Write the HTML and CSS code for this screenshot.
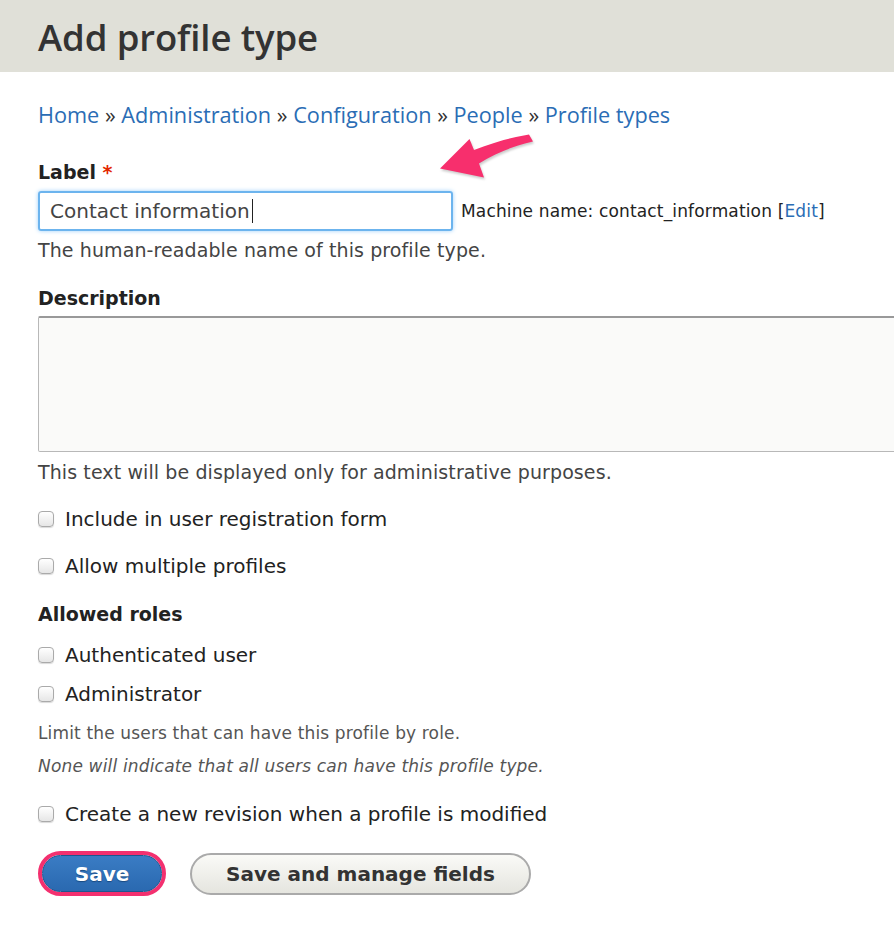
FILE: index.html
```html
<!DOCTYPE html>
<html lang="en">
<head>
<meta charset="utf-8">
<title>Add profile type</title>
<link rel="stylesheet" href="styles.css">
</head>
<body>
<header class="page-header">
  <h1 class="page-title">Add profile type</h1>
</header>
<main class="content">
  <nav class="breadcrumb">
    <a href="#">Home</a> » <a href="#">Administration</a> » <a href="#">Configuration</a> » <a href="#">People</a> » <a href="#">Profile types</a>
  </nav>
  <form class="form">
    <div class="item item-label">
      <label class="label">Label <span class="req">*</span></label>
      <div class="input-row">
        <div class="text-input"><span>Contact information</span><span class="caret"></span></div>
        <span class="machine">Machine name: contact_information <span class="bracket">[<a href="#">Edit</a>]</span></span>
      </div>
      <div class="help">The human-readable name of this profile type.</div>
    </div>
    <div class="item item-desc">
      <label class="label">Description</label>
      <div class="textarea"></div>
      <div class="help help-desc">This text will be displayed only for administrative purposes.</div>
    </div>
    <label class="check check-first"><input type="checkbox"><span>Include in user registration form</span></label>
    <label class="check check-second"><input type="checkbox"><span>Allow multiple profiles</span></label>
    <div class="roles">
      <div class="label">Allowed roles</div>
      <label class="check check-role1"><input type="checkbox"><span>Authenticated user</span></label>
      <label class="check check-role2"><input type="checkbox"><span>Administrator</span></label>
      <div class="small">Limit the users that can have this profile by role.</div>
      <div class="small small-italic">None will indicate that all users can have this profile type.</div>
    </div>
    <label class="check check-rev"><input type="checkbox"><span>Create a new revision when a profile is modified</span></label>
    <div class="actions">
      <span class="save-ring"><button type="button" class="btn btn-primary">Save</button></span>
      <button type="button" class="btn btn-secondary">Save and manage fields</button>
    </div>
  </form>
  <svg class="arrow" width="100" height="50" viewBox="435 130 100 50" aria-hidden="true">
    <path d="M440 168.5 L469.5 139 L474 150 C494 142 511 137.5 529 134.5 L533 141.5 C512 146.5 495 153.5 479 163.5 L484 177.5 Z" fill="#f72f6d"/>
  </svg>
</main>
</body>
</html>
```
FILE: styles.css
```css
html, body {
  margin: 0;
  padding: 0;
  background: #fff;
  overflow: hidden;
}
body {
  font-family: "DejaVu Sans", "Liberation Sans", sans-serif;
  color: #333;
  width: 894px;
  height: 944px;
}
.page-header {
  background: #e0e0d8;
  height: 72px;
  padding: 0 38px;
  display: flex;
  align-items: center;
}
.page-title {
  margin: 2px 0 0;
  font-family: "Open Sans", "Lato", sans-serif;
  font-weight: 600;
  font-size: 36.5px;
  color: #333;
  line-height: 40px;
  letter-spacing: -0.1px;
}
.content {
  position: relative;
  padding: 31px 0 0 38px;
}
.breadcrumb {
  line-height: 24px;
  font-family: "Open Sans", "Lato", sans-serif;
  font-size: 21.7px;
  color: #333;
}
.breadcrumb a, .machine a {
  color: #2a6db5;
  text-decoration: none;
}
.label {
  display: block;
  font-weight: bold;
  font-size: 19px;
  line-height: 24px;
  color: #222;
}
.req { color: #e32700; }
.item-label { margin-top: 33px; }
.input-row {
  margin-top: 7px;
  display: flex;
  align-items: center;
  gap: 8px;
}
.text-input {
  box-sizing: border-box;
  width: 415px;
  height: 40px;
  border: 2px solid #6cb4ee;
  border-radius: 3px;
  box-shadow: 0 0 4px #9fd0fa;
  display: flex;
  align-items: center;
  padding-left: 10px;
  font-size: 20px;
  color: #444;
}
.caret {
  display: inline-block;
  width: 1px;
  height: 24px;
  background: #222;
  margin-left: 2px;
}
.machine {
  font-size: 17px;
  letter-spacing: 0.15px;
  color: #222;
}
.help {
  margin-top: 7px;
  font-size: 19px;
  letter-spacing: 0.1px;
  line-height: 24px;
  color: #444;
}
.item-desc { margin-top: 24px; }
.textarea {
  margin-top: 6px;
  box-sizing: border-box;
  width: 900px;
  height: 136px;
  background: #fafaf9;
  border: 1px solid #b8b8b8;
  border-top: 2px solid #999;
  border-radius: 2px;
}
.help-desc { margin-top: 8px; }
.check {
  display: flex;
  align-items: center;
  height: 24px;
  font-size: 20px;
  color: #222;
}
.check input {
  appearance: none;
  -webkit-appearance: none;
  box-sizing: border-box;
  margin: 0 11px 0 0;
  width: 16px;
  height: 16px;
  border: 1px solid #aaa;
  border-radius: 4px;
  background: linear-gradient(#fff, #e6e6e6);
  box-shadow: 0 1px 1px rgba(0,0,0,0.15);
}
.check-first { margin-top: 23px; }
.check-second { margin-top: 23px; }
.roles { margin-top: 24px; }
.check-role1 { margin-top: 17px; }
.check-role2 { margin-top: 15px; }
.small {
  margin-top: 16px;
  font-size: 17px;
  letter-spacing: 0.15px;
  line-height: 22px;
  color: #555;
}
.small-italic {
  margin-top: 11px;
  font-style: italic;
  letter-spacing: 0.17px;
}
.check-rev { margin-top: 25px; }
.actions {
  margin-top: 25px;
  display: flex;
  align-items: center;
  gap: 24px;
}
.save-ring {
  display: inline-flex;
  border: 4px solid #f3306f;
  border-radius: 24px;
}
.btn {
  font-family: "DejaVu Sans", sans-serif;
  font-weight: bold;
  font-size: 20px;
  border-radius: 20px;
  cursor: pointer;
}
.btn-primary {
  width: 120px;
  height: 37px;
  color: #fff;
  background: linear-gradient(#3a7cc4, #2a69b0);
  border: 1px solid #1e5690;
  text-shadow: 0 1px 1px #1a4a80;
}
.btn-secondary {
  width: 341px;
  height: 42px;
  color: #333;
  background: linear-gradient(#fafaf7, #e5e5df);
  border: 2px solid #aaa;
  border-radius: 21px;
}
.arrow {
  position: absolute;
  left: 435px;
  top: 58px;
  filter: drop-shadow(1px 2px 1px rgba(0,0,0,0.2));
}
```
